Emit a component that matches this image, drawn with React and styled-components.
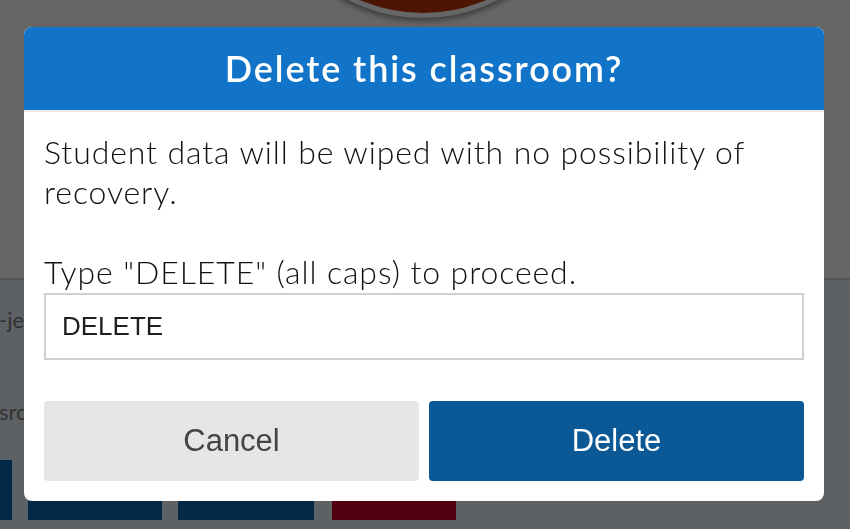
import React from "react";
import styled, { createGlobalStyle } from "styled-components";

const GlobalStyle = createGlobalStyle`
  html, body { margin: 0; padding: 0; }
  body {
    width: 850px;
    height: 529px;
    overflow: hidden;
    font-family: "Lato", "Open Sans", sans-serif;
    background: #ebf3fa;
  }
  * { box-sizing: border-box; }
`;

const Page = styled.div`
  width: 850px;
  height: 529px;
  display: flex;
  flex-direction: column;
  overflow: hidden;
`;

const Hero = styled.div`
  height: 280px;
  background: #ffffff;
  display: flex;
  justify-content: center;
  padding-right: 4px;
  border-bottom: 2px solid #d5d5d5;
  flex-shrink: 0;
`;

const Avatar = styled.div`
  width: 330px;
  height: 330px;
  margin-top: -312px;
  border-radius: 50%;
  background: #c0370c;
  border: 5px solid #ffffff;
  box-shadow: 0 3px 6px rgba(0, 0, 0, 0.45);
  flex-shrink: 0;
`;

const Lower = styled.div`
  flex: 1;
  background: #ebf3fa;
  display: flex;
  flex-direction: column;
`;

const InfoLine = styled.div`
  font-family: "Lato", sans-serif;
  font-size: 22px;
  color: #7d7d7d;
  white-space: nowrap;
  margin-left: ${(p) => p.$indent}px;
  margin-top: ${(p) => p.$top}px;
  line-height: 28px;
`;

const ActionRow = styled.div`
  display: flex;
  gap: 16px;
  margin-top: ${(p) => p.$top}px;
`;

const PageButton = styled.div`
  width: ${(p) => p.$w}px;
  height: 60px;
  background: ${(p) => (p.$danger ? "#cd0026" : "#0569b4")};
  margin-right: ${(p) => p.$mr || 0}px;
  flex-shrink: 0;
`;

const Overlay = styled.div`
  position: fixed;
  inset: 0;
  background: rgba(0, 0, 0, 0.6);
  display: flex;
  align-items: flex-start;
  justify-content: flex-start;
  padding: 27px 0 0 24px;
`;

const Dialog = styled.div`
  width: 800px;
  background: #ffffff;
  border-radius: 8px;
  overflow: hidden;
  display: flex;
  flex-direction: column;
`;

const Header = styled.div`
  height: 85px;
  background: #1174c8;
  border-bottom: 2px solid #ececec;
  display: flex;
  align-items: center;
  justify-content: center;
  padding-bottom: 2px;
`;

const Title = styled.h2`
  margin: 0;
  font-family: "Lato", sans-serif;
  font-weight: 600;
  font-size: 36px;
  color: #ffffff;
  letter-spacing: 1.9px;
`;

const Body = styled.div`
  padding: 20px 20px 20px;
  display: flex;
  flex-direction: column;
`;

const Text = styled.p`
  margin: 0 0 ${(p) => p.$mb}px;
  font-family: "Lato", sans-serif;
  font-weight: 300;
  font-size: 32px;
  line-height: 40px;
  letter-spacing: 0.9px;
  color: #111111;
`;

const Field = styled.input`
  height: 67px;
  width: 100%;
  border: 2px solid #cfcfcf;
  border-radius: 0;
  padding: 0 16px;
  font-family: "Liberation Sans", Arial, sans-serif;
  font-size: 26px;
  color: #1e1e1e;
  background: #ffffff;
  outline: none;
  margin-bottom: 41px;
`;

const Buttons = styled.div`
  display: flex;
  gap: 10px;
`;

const Button = styled.button`
  flex: 1;
  height: 80px;
  border: none;
  border-radius: 4px;
  font-family: "Liberation Sans", Arial, sans-serif;
  font-size: 31px;
  cursor: pointer;
  background: ${(p) => (p.$primary ? "#0a5896" : "#e6e6e6")};
  color: ${(p) => (p.$primary ? "#ffffff" : "#444444")};
`;

export default function App() {
  return (
    <>
      <GlobalStyle />
      <Page>
        <Hero>
          <Avatar />
        </Hero>
        <Lower>
          <InfoLine $indent={-1} $top={26}>-jeu</InfoLine>
          <InfoLine $indent={-1} $top={64}>sroom</InfoLine>
          <ActionRow $top={34}>
            <PageButton $w={12} />
            <PageButton $w={134} />
            <PageButton $w={136} $mr={2} />
            <PageButton $w={124} $danger />
          </ActionRow>
        </Lower>
      </Page>
      <Overlay>
        <Dialog role="dialog" aria-modal="true">
          <Header>
            <Title>Delete this classroom?</Title>
          </Header>
          <Body>
            <Text $mb={40}>
              Student data will be wiped with no possibility of recovery.
            </Text>
            <Text $mb={1}>Type "DELETE" (all caps) to proceed.</Text>
            <Field defaultValue="DELETE" />
            <Buttons>
              <Button>Cancel</Button>
              <Button $primary>Delete</Button>
            </Buttons>
          </Body>
        </Dialog>
      </Overlay>
    </>
  );
}
